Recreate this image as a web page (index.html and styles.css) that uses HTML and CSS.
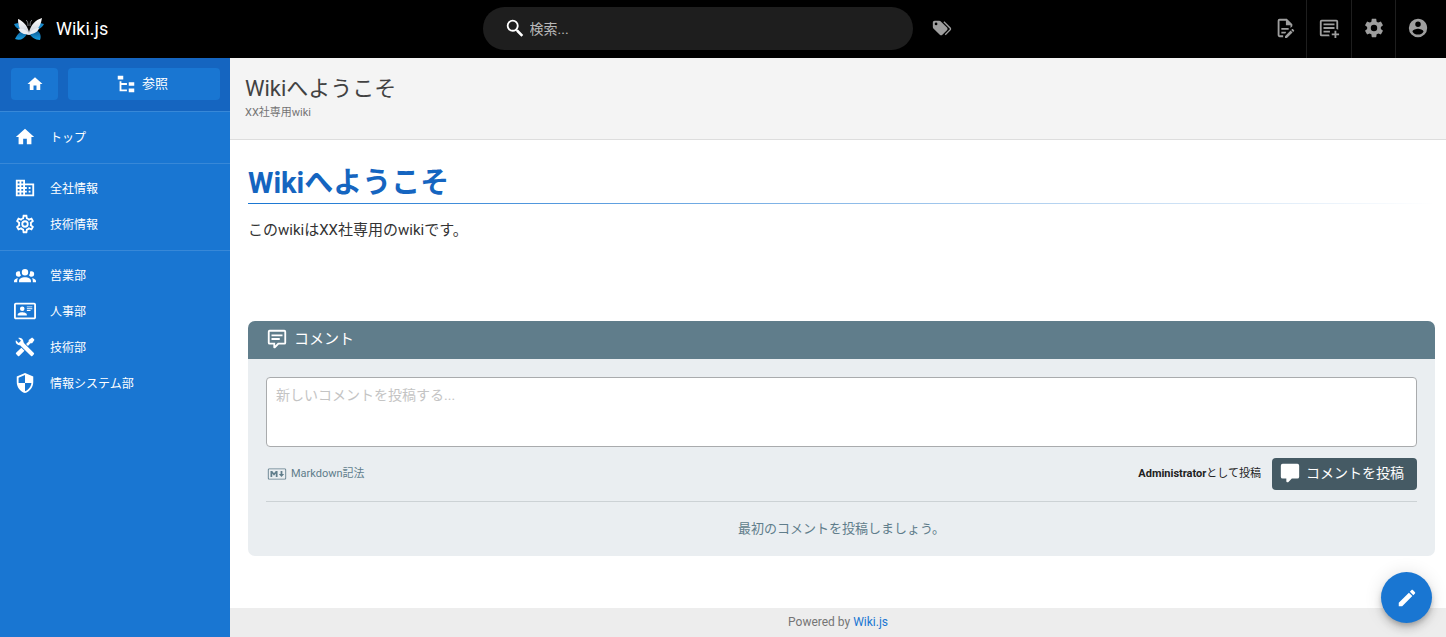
FILE: index.html
```html
<!DOCTYPE html>
<html lang="ja">
<head>
<meta charset="utf-8">
<meta name="viewport" content="width=device-width, initial-scale=1">
<title>Wikiへようこそ | Wiki.js</title>
<link rel="stylesheet" href="styles.css">
</head>
<body>
<div class="app">
  <header class="topbar">
    <a class="brand" href="#">
      <svg class="logo" viewBox="0 0 30 26" aria-hidden="true">
        <defs>
          <linearGradient id="petal" x1="0" y1="0" x2="0" y2="1"><stop offset="0" stop-color="#fff"/><stop offset="1" stop-color="#c3cad6"/></linearGradient>
          <linearGradient id="wing" x1="0" y1="0" x2="0" y2="1"><stop offset="0" stop-color="#0b4f86"/><stop offset="1" stop-color="#19a0e3"/></linearGradient>
        </defs>
        <path fill="#1687c9" d="M0 8l4-1 4 7-3-1C2 12 1 10 0 8zM30 8l-4-1-4 7 3-1c3-2 4-3 5-5z"/>
        <path fill="url(#wing)" d="M14 15c-5-2-10 1-13 8 5 2 9 0 12-5zM16 15c5-2 7-1 9 1 2 3 2 5 1 8-5 0-9-3-11-7z"/>
        <path fill="url(#petal)" d="M4 3c5 2 9 6 11 13C17 9 21 4 28 2c-1 6-3 10-6 12l-6 5h-2L7 15C5 12 4 8 4 3z"/>
        <path fill="#e9edf3" d="M4 13c5-1 9 1 11 5 2-4 6-6 10-6-1 4-5 6-10 6-5 1-9-1-11-5z"/>
        <path fill="none" stroke="#74777c" d="M14 10c0-3-.5-5-2-6M16 10c0-3 .5-5 2-6"/>
      </svg>
      <span>Wiki.js</span>
    </a>
    <div class="search-area">
      <label class="search">
        <svg class="icon" viewBox="0 0 24 24" aria-hidden="true"><path d="M9.500 3A6.500 6.500 0 0 1 16 9.500c0 1.610-.59 3.090-1.560 4.230l.27.27h.79l5.500 5.500-2 2-5.500-5.500v-.79l-.27-.27A6.516 6.516 0 0 1 9.500 16a6.500 6.500 0 0 1 0-13m0 2a4.500 4.500 0 1 0 0 9 4.500 4.500 0 0 0 0-9z"/></svg>
        <input type="text" placeholder="検索..." aria-label="検索">
      </label>
      <button class="tags" aria-label="タグ"><svg class="icon" viewBox="0 0 24 24"><path d="M5.500,9A1.500,1.500 0 0,0 7,7.500A1.500,1.500 0 0,0 5.500,6A1.500,1.500 0 0,0 4,7.500A1.500,1.500 0 0,0 5.500,9M17.410,11.580C17.770,11.940 18,12.440 18,13C18,13.550 17.780,14.050 17.410,14.410L12.410,19.410C12.050,19.770 11.550,20 11,20C10.450,20 9.950,19.780 9.580,19.410L2.590,12.420C2.220,12.050 2,11.550 2,11V6C2,4.890 2.890,4 4,4H9C9.550,4 10.050,4.220 10.410,4.580L17.410,11.580M13.540,5.710L14.540,4.710L21.410,11.580C21.780,11.940 22,12.450 22,13C22,13.550 21.780,14.050 21.420,14.410L16.040,19.790L15.040,18.790L20.750,13L13.540,5.710Z"/></svg></button>
    </div>
    <div class="actions">
      <button aria-label="ページ操作"><svg class="icon" viewBox="0 0 24 24"><path d="M8,12H16V14H8V12M10,20H6V4H13V9H18V12.100L20,10.100V8L14,2H6A2,2 0 0,0 4,4V20A2,2 0 0,0 6,22H10V20M8,18H12.100L13,17.100V16H8V18M20.200,13C20.300,13 20.500,13.100 20.600,13.200L21.900,14.500C22.100,14.700 22.100,15.100 21.900,15.300L20.900,16.300L18.800,14.200L19.800,13.200C19.900,13.100 20,13 20.200,13M20.200,16.900L14.100,23H12V20.900L18.100,14.800L20.200,16.900Z"/></svg></button>
      <button aria-label="新規ページ"><svg class="icon" viewBox="0 0 24 24"><path d="M12 21H4a2 2 0 0 1-2-2V5a2 2 0 0 1 2-2h16a2 2 0 0 1 2 2v8.800a6 6 0 0 0-2-.7V5H4v14h8.100a6 6 0 0 0 .7 2zM6 7h12v2H6zm0 4h12v2H6zm0 4h7v2H6zm12 0h2v3h3v2h-3v3h-2v-3h-3v-2h3z"/></svg></button>
      <button aria-label="管理"><svg class="icon" viewBox="0 0 24 24"><path d="M12,15.500A3.500,3.500 0 0,1 8.500,12A3.500,3.500 0 0,1 12,8.500A3.500,3.500 0 0,1 15.500,12A3.500,3.500 0 0,1 12,15.500M19.430,12.970C19.470,12.650 19.500,12.330 19.500,12C19.500,11.670 19.470,11.340 19.430,11L21.540,9.370C21.730,9.220 21.780,8.950 21.660,8.730L19.660,5.270C19.540,5.050 19.270,4.960 19.050,5.050L16.560,6.050C16.040,5.660 15.500,5.320 14.870,5.070L14.500,2.420C14.460,2.180 14.250,2 14,2H10C9.750,2 9.540,2.180 9.500,2.420L9.130,5.070C8.500,5.320 7.960,5.660 7.440,6.050L4.950,5.050C4.730,4.960 4.460,5.050 4.340,5.270L2.340,8.730C2.210,8.950 2.270,9.220 2.460,9.370L4.570,11C4.530,11.340 4.500,11.670 4.500,12C4.500,12.330 4.530,12.650 4.570,12.970L2.460,14.630C2.270,14.780 2.210,15.050 2.340,15.270L4.340,18.730C4.460,18.950 4.730,19.030 4.950,18.950L7.440,17.940C7.960,18.340 8.500,18.680 9.130,18.930L9.500,21.580C9.540,21.820 9.750,22 10,22H14C14.250,22 14.460,21.820 14.500,21.580L14.870,18.930C15.500,18.670 16.040,18.340 16.560,17.940L19.050,18.950C19.270,19.030 19.540,18.950 19.660,18.730L21.660,15.270C21.780,15.050 21.730,14.780 21.540,14.630L19.430,12.970Z"/></svg></button>
      <button aria-label="アカウント"><svg class="icon" viewBox="0 0 24 24"><path d="M12,19.200C9.500,19.200 7.290,17.920 6,16C6.030,14 10,12.900 12,12.900C14,12.900 17.970,14 18,16C16.710,17.920 14.500,19.200 12,19.200M12,5A3,3 0 0,1 15,8A3,3 0 0,1 12,11A3,3 0 0,1 9,8A3,3 0 0,1 12,5M12,2A10,10 0 0,0 2,12A10,10 0 0,0 12,22A10,10 0 0,0 22,12C22,6.470 17.500,2 12,2Z"/></svg></button>
    </div>
  </header>

  <div class="body">
    <aside class="sidebar">
      <div class="side-tools">
        <a class="side-btn" href="#" aria-label="ホーム"><svg class="icon small" viewBox="0 0 24 24"><path d="M10,20V14H14V20H19V12H22L12,3L2,12H5V20H10Z"/></svg></a>
        <button class="side-btn wide"><svg class="icon" viewBox="0 0 24 24" aria-hidden="true"><path d="M3,3H9V7H3V3M15,10H21V14H15V10M15,17H21V21H15V17M13,13H7V18H13V20H5V9H7V11H13V13Z"/></svg><span>参照</span></button>
      </div>
      <nav>
        <ul class="nav-group">
          <li><a href="#"><svg class="icon" viewBox="0 0 24 24" aria-hidden="true"><path d="M10,20V14H14V20H19V12H22L12,3L2,12H5V20H10Z"/></svg><span>トップ</span></a></li>
        </ul>
        <ul class="nav-group">
          <li><a href="#"><svg class="icon" viewBox="0 0 24 24" aria-hidden="true"><path d="M18,15H16V17H18M18,11H16V13H18M20,19H12V17H14V15H12V13H14V11H12V9H20M10,7H8V5H10M10,11H8V9H10M10,15H8V13H10M10,19H8V17H10M6,7H4V5H6M6,11H4V9H6M6,15H4V13H6M6,19H4V17H6M12,7V3H2V21H22V7H12Z"/></svg><span>全社情報</span></a></li>
          <li><a href="#"><svg class="icon" viewBox="0 0 24 24" aria-hidden="true"><path d="M12,8A4,4 0 0,1 16,12A4,4 0 0,1 12,16A4,4 0 0,1 8,12A4,4 0 0,1 12,8M12,10A2,2 0 0,0 10,12A2,2 0 0,0 12,14A2,2 0 0,0 14,12A2,2 0 0,0 12,10M10,22C9.750,22 9.540,21.820 9.500,21.580L9.130,18.930C8.500,18.680 7.960,18.340 7.440,17.940L4.950,18.950C4.730,19.030 4.460,18.950 4.340,18.730L2.340,15.270C2.210,15.050 2.270,14.780 2.460,14.630L4.570,12.970L4.500,12L4.570,11L2.460,9.370C2.270,9.220 2.210,8.950 2.340,8.730L4.340,5.270C4.460,5.050 4.730,4.960 4.950,5.050L7.440,6.050C7.960,5.660 8.500,5.320 9.130,5.070L9.500,2.420C9.540,2.180 9.750,2 10,2H14C14.250,2 14.460,2.180 14.500,2.420L14.870,5.070C15.500,5.320 16.040,5.660 16.560,6.050L19.050,5.050C19.270,4.960 19.540,5.050 19.660,5.270L21.660,8.730C21.790,8.950 21.730,9.220 21.540,9.370L19.430,11L19.500,12L19.430,13L21.540,14.630C21.730,14.780 21.790,15.050 21.660,15.270L19.660,18.730C19.540,18.950 19.270,19.040 19.050,18.950L16.560,17.950C16.040,18.340 15.500,18.680 14.870,18.930L14.500,21.580C14.460,21.820 14.250,22 14,22H10M11.250,4L10.880,6.610C9.680,6.860 8.620,7.500 7.850,8.390L5.440,7.350L4.690,8.650L6.800,10.200C6.400,11.370 6.400,12.640 6.800,13.800L4.680,15.360L5.430,16.660L7.860,15.620C8.630,16.500 9.680,17.140 10.870,17.380L11.240,20H12.760L13.130,17.390C14.320,17.140 15.370,16.500 16.140,15.620L18.570,16.660L19.320,15.360L17.200,13.810C17.600,12.640 17.600,11.370 17.200,10.200L19.310,8.650L18.560,7.350L16.150,8.390C15.380,7.500 14.320,6.860 13.120,6.620L12.750,4H11.250Z"/></svg><span>技術情報</span></a></li>
        </ul>
        <ul class="nav-group">
          <li><a href="#"><svg class="icon" viewBox="0 0 24 24" aria-hidden="true"><path d="M12,5.500A3.500,3.500 0 0,1 15.500,9A3.500,3.500 0 0,1 12,12.500A3.500,3.500 0 0,1 8.500,9A3.500,3.500 0 0,1 12,5.500M5,8C5.560,8 6.080,8.150 6.530,8.420C6.380,9.850 6.800,11.270 7.660,12.380C7.160,13.340 6.160,14 5,14A3,3 0 0,1 2,11A3,3 0 0,1 5,8M19,8A3,3 0 0,1 22,11A3,3 0 0,1 19,14C17.840,14 16.840,13.340 16.340,12.380C17.200,11.270 17.620,9.850 17.470,8.420C17.920,8.150 18.440,8 19,8M5.500,18.250C5.500,16.180 8.410,14.500 12,14.500C15.590,14.500 18.500,16.180 18.500,18.250V20H5.500V18.250M0,20V18.500C0,17.110 1.890,15.940 4.450,15.600C3.860,16.280 3.500,17.220 3.500,18.250V20H0M24,20H20.500V18.250C20.500,17.220 20.140,16.280 19.550,15.600C22.110,15.940 24,17.110 24,18.500V20Z"/></svg><span>営業部</span></a></li>
          <li><a href="#"><svg class="icon" viewBox="0 0 24 24" aria-hidden="true"><path d="M22,3H2C0.910,3.040 0.040,3.910 0,5V19C0.040,20.090 0.910,20.960 2,21H22C23.090,20.960 23.960,20.090 24,19V5C23.960,3.910 23.090,3.040 22,3M22,19H2V5H22V19M14,17V15.750C14,14.090 10.660,13.250 9,13.250C7.340,13.250 4,14.090 4,15.750V17H14M9,7A2.500,2.500 0 0,0 6.500,9.500A2.500,2.500 0 0,0 9,12A2.500,2.500 0 0,0 11.500,9.500A2.500,2.500 0 0,0 9,7M14,7V8H20V7H14M14,9V10H20V9H14M14,11V12H18V11H14"/></svg><span>人事部</span></a></li>
          <li><a href="#"><svg class="icon" viewBox="0 0 24 24" aria-hidden="true"><path d="M21.700 18.600L12.700 9.600C12.700 9.600 10.400 7.400 10.300 6.500C10.300 5.200 9.800 3.900 8.800 3C7.600 1.900 6 1.600 4.600 2.100L7.600 5.100L5.100 7.600L2.100 4.600C1.500 6 1.900 7.700 3 8.800C4 9.800 5.300 10.200 6.600 10.200L18.600 21.700C19 22.100 19.600 22.100 20 21.700L21.700 20C22.100 19.600 22.100 19 21.700 18.600M2.300 18.300L8 12.700L11.400 16L5.700 21.700A1 1 0 0 1 4.300 21.700L2.300 19.700A1 1 0 0 1 2.300 18.300M13.200 8.800L16 6V4.300L19 2.100A1 1 0 0 1 20.400 2.100L21.900 3.600A1 1 0 0 1 21.900 5L19.800 8H18L15.200 10.800Z"/></svg><span>技術部</span></a></li>
          <li><a href="#"><svg class="icon" viewBox="0 0 24 24" aria-hidden="true"><path d="M12,12H19C18.470,16.110 15.720,19.780 12,20.920V12H5V6.300L12,3.190M12,1L3,5V11C3,16.550 6.840,21.730 12,23C17.160,21.730 21,16.550 21,11V5L12,1Z"/></svg><span>情報システム部</span></a></li>
        </ul>
      </nav>
    </aside>

    <div class="page">
      <div class="page-head">
        <div class="page-title">Wikiへようこそ</div>
        <div class="page-desc">XX社専用wiki</div>
      </div>
      <main class="content">
        <h1>Wikiへようこそ</h1>
        <p>このwikiはXX社専用のwikiです。</p>
        <section class="comments">
          <h2><svg class="icon" viewBox="0 0 24 24" aria-hidden="true"><path d="M4 2h16a2 2 0 0 1 2 2v12a2 2 0 0 1-2 2h-6l-3.700 3.700a1 1 0 0 1-.8.300H9a1 1 0 0 1-1-1v-3H4a2 2 0 0 1-2-2V4a2 2 0 0 1 2-2m0 2v12h6v3l3-3h7V4zm2 3h12v2H6zm0 4h9v2H6z"/></svg>コメント</h2>
          <div class="comments-body">
            <textarea placeholder="新しいコメントを投稿する..." aria-label="新しいコメント"></textarea>
            <div class="comment-row">
              <span class="syntax"><svg class="icon" viewBox="0 0 24 24" aria-hidden="true"><path d="M20.560 18H3.440C2.650 18 2 17.370 2 16.590V7.410C2 6.630 2.650 6 3.440 6H20.560C21.350 6 22 6.630 22 7.410V16.590C22 17.370 21.350 18 20.560 18M3.440 6.940C3.180 6.940 2.960 7.150 2.960 7.410V16.600C2.960 16.850 3.180 17.060 3.440 17.060H20.560C20.820 17.060 21.040 16.850 21.040 16.600V7.410C21.040 7.150 20.820 6.940 20.560 6.940H3.440M4.890 15.190V8.810H6.810L8.730 11.160L10.650 8.810H12.580V15.190H10.650V11.530L8.730 13.880L6.810 11.530V15.190H4.890M16.900 15.190L14 12.090H15.940V8.810H17.870V12.090H19.790L16.900 15.190"/></svg>Markdown記法</span>
              <span class="poster"><strong>Administrator</strong>として投稿</span>
              <button class="post"><svg class="icon" viewBox="0 0 24 24" aria-hidden="true"><path d="M4 2h16a2 2 0 0 1 2 2v12a2 2 0 0 1-2 2h-6l-3.700 3.700a1 1 0 0 1-.8.300H9a1 1 0 0 1-1-1v-3H4a2 2 0 0 1-2-2V4a2 2 0 0 1 2-2z"/></svg>コメントを投稿</button>
            </div>
            <div class="empty">最初のコメントを投稿しましょう。</div>
          </div>
        </section>
      </main>
      <footer class="footer">Powered by <a href="#">Wiki.js</a></footer>
    </div>
  </div>
  <button class="fab" aria-label="編集"><svg class="icon" viewBox="0 0 24 24"><path d="M20.710,7.040C21.100,6.650 21.100,6 20.710,5.630L18.370,3.290C18,2.900 17.350,2.900 16.960,3.290L15.120,5.120L18.870,8.870M3,17.250V21H6.750L17.810,9.930L14.060,6.180L3,17.250Z"/></svg></button>
</div>
</body>
</html>
```
FILE: styles.css
```css
* { box-sizing: border-box; }
body {
  margin: 0;
  color: #333;
  background: #fff;
  font: 14px/20px Roboto, "Noto Sans CJK JP", sans-serif;
}
button, input, textarea { font: inherit; color: inherit; margin: 0; }
button { display: flex; align-items: center; justify-content: center; padding: 0; border: 0; background: none; cursor: pointer; }
a { color: inherit; text-decoration: none; }
.icon { width: 22px; height: 22px; flex: none; fill: currentColor; display: block; }
.icon.small { width: 18px; height: 18px; }

.app { display: flex; flex-direction: column; min-height: 100vh; }

.topbar {
  display: grid;
  grid-template-columns: 1fr 2fr 1fr;
  height: 58px;
  background: #000;
  color: #9e9e9e;
}
.brand { display: flex; align-items: center; gap: 12px; padding-left: 14px; color: #fff; font-size: 18px; }
.logo { width: 30px; height: 26px; }
.search-area { display: flex; align-items: center; justify-content: center; gap: 18px; padding: 0 11px 2px 0; }
.search {
  display: flex;
  align-items: center;
  gap: 4px;
  width: 430px;
  height: 43px;
  padding: 0 21px;
  border-radius: 22px;
  background: #1e1e1e;
  color: #fff;
}
.search input { flex: 1; min-width: 0; padding: 2px 0 0; border: 0; outline: 0; background: none; }
.search input::placeholder { color: #b8b8b8; opacity: 1; }
.actions { display: flex; justify-content: flex-end; }
.actions button { width: 44px; padding-bottom: 2px; border-right: 1px solid #1e1e1e; }
.actions button:nth-child(2) { width: 45px; }
.actions button:last-child { width: 50px; padding-right: 7px; border-right: 0; }

.body { display: flex; flex: 1; }
.sidebar { width: 230px; flex: none; background: #1976d2; color: #fff; font-size: 12px; }
.side-tools {
  display: flex;
  gap: 10px;
  padding: 10px 10px 11px 11px;
  background: #1565c0;
  border-bottom: 1px solid #3788d8;
}
.side-btn { display: flex; align-items: center; justify-content: center; gap: 5px; width: 47px; height: 32px; border-radius: 4px; background: #1976d2; }
.side-btn.wide { flex: 1; padding-right: 5px; font-size: 13px; }
.nav-group { margin: 0; padding: 7px 0 8px; list-style: none; }
.nav-group + .nav-group { padding: 6px 0 8px; border-top: 1px solid #3788d8; }
.nav-group a { display: flex; align-items: center; gap: 14px; height: 36px; padding-left: 14px; }
.nav-group span { padding-top: 2px; }

.page { display: flex; flex-direction: column; flex: 1; min-width: 0; }
.page-head { height: 82px; padding: 17px 15px; background: #f4f4f4; border-bottom: 1px solid #ddd; }
.page-title { color: #424242; font-size: 22px; line-height: 28px; font-weight: 400; }
.page-desc { color: #757575; font-size: 11px; line-height: 20px; }
.content { flex: 1; padding: 23px 11px 52px 18px; }
h1 {
  margin: 0 0 16px;
  padding-bottom: 1px;
  color: #1565c0;
  font-size: 29px;
  line-height: 40px;
  font-weight: 700;
  background: linear-gradient(to right, #1976d2, rgba(25, 118, 210, 0)) bottom / 100% 1px no-repeat;
}
.content p { margin: 0 0 81px; font-size: 15px; }
.comments { overflow: hidden; border-radius: 7px; background: #eaeef1; }
h2 { display: flex; align-items: center; gap: 6px; height: 38px; margin: 0; padding: 0 18px 2px; background: #607d8b; color: #fff; font-size: 15px; font-weight: 400; }
.comments-body { padding: 18px 18px 17px; }
textarea { display: block; width: 100%; height: 70px; padding: 7px 9px; border: 1px solid #a9abad; border-radius: 4px; background: #fff; resize: none; outline: 0; }
textarea::placeholder { color: #c4c4c4; opacity: 1; }
.comment-row { display: flex; align-items: center; padding: 11px 0; border-bottom: 1px solid #ccd2d5; font-size: 11px; }
.syntax { display: flex; align-items: center; gap: 3px; flex: 1; color: #607d8b; }
.poster { margin-right: 11px; color: #212121; }
.post { gap: 5px; width: 145px; height: 32px; padding: 0 6px 2px 0; border-radius: 4px; background: #455a64; color: #fff; font-size: 14px; }
.empty { padding-top: 17px; color: #607d8b; font-size: 13px; text-align: center; }
.footer { padding: 4px 0 5px; background: #ededed; color: #757575; font-size: 12px; text-align: center; }
.footer a { color: #1976d2; }
.fab {
  position: fixed;
  right: 14px;
  bottom: 14px;
  width: 51px;
  height: 51px;
  border-radius: 50%;
  background: #1976d2;
  color: #fff;
  box-shadow: 0 3px 5px -1px rgba(0,0,0,.2), 0 6px 10px rgba(0,0,0,.14), 0 1px 18px rgba(0,0,0,.12);
}
```
